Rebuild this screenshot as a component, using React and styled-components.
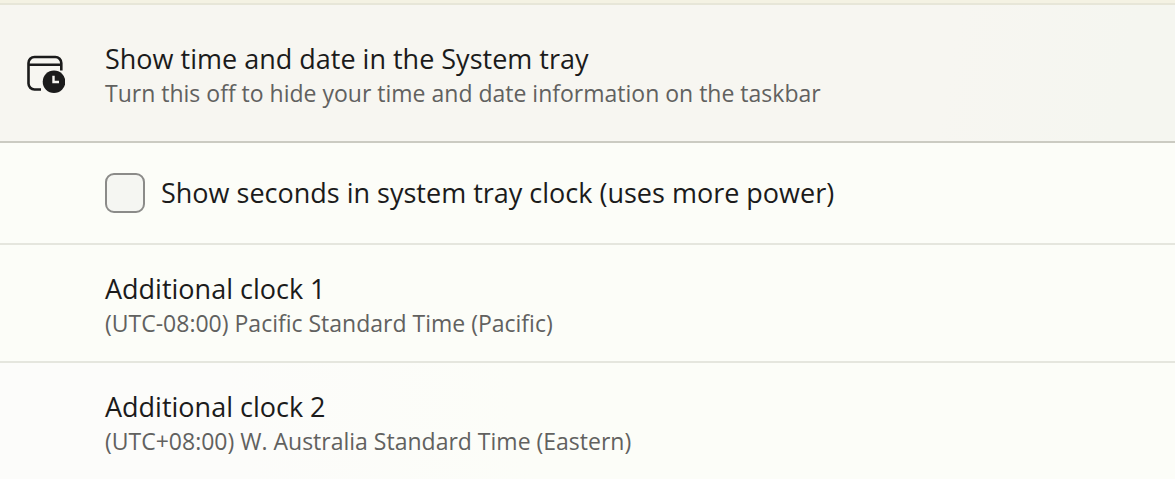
import React, { useState } from "react";
import styled, { createGlobalStyle } from "styled-components";

const GlobalStyle = createGlobalStyle`
  body {
    margin: 0;
    background-color: #fcfdf8;
    color: #1b1b1b;
    font-family: "Segoe UI", "Open Sans", "Noto Sans", sans-serif;
  }
`;

const Panel = styled.main`
  border-top: 3px solid #f4f2e3;
`;

const Header = styled.header`
  display: flex;
  align-items: center;
  gap: 40px;
  padding: 36px 26px 32px 25px;
  border-top: 2px solid #e7e6d8;
  border-bottom: 2px solid #cbcbc2;
  background: linear-gradient(100deg, #f7f6f1 80%, #f5f6f0 95%);
`;

const Icon = styled.svg`
  width: 40px;
  height: 40px;
  flex-shrink: 0;
`;

const Row = styled.section`
  padding: ${({ $tall }) => ($tall ? "30px 26px 30px 105px" : "26px 26px 22px 105px")};
  border-bottom: ${({ $last }) => ($last ? "none" : "2px solid #e5e6de")};
  background: ${({ $last }) =>
    $last ? "linear-gradient(80deg, #fcfcfa 20%, #fcfdf8 45%)" : "transparent"};
`;

const Title = styled.h2`
  margin: 0;
  font-size: 27px;
  font-weight: 400;
  line-height: 36px;
`;

const Description = styled.p`
  margin: 0;
  color: #61615f;
  font-size: 23px;
  line-height: 32px;
`;

const CheckLabel = styled.label`
  display: flex;
  align-items: center;
  gap: 16px;
  font-size: 27px;
  line-height: 36px;
`;

const Checkbox = styled.input`
  appearance: none;
  box-sizing: border-box;
  width: 40px;
  height: 40px;
  margin: 0;
  flex-shrink: 0;
  border: 2px solid #8b8b89;
  border-radius: 9px;
  background-color: #f5f6f2;

  &:checked {
    background-color: #5d5d4b;
  }
`;

const CalendarClockIcon = () => (
  <Icon viewBox="0 0 40 40" fill="none" aria-hidden="true">
    <path
      d="M36.3 15.500V8A6 6 0 0 0 30.300 2H9.500A6 6 0 0 0 3.500 8V28.500A6 6 0 0 0 9.500 34.500H16M3.500 9.800H36"
      stroke="#1b1b1b"
      strokeWidth="2.6"
    />
    <circle cx="29" cy="26.800" r="11.300" fill="#1b1b1b" />
    <path d="M28.500 20.800V27H34" stroke="#f7f6f1" strokeWidth="2.4" />
  </Icon>
);

const clocks = [
  { name: "Additional clock 1", zone: "(UTC-08:00) Pacific Standard Time (Pacific)" },
  { name: "Additional clock 2", zone: "(UTC+08:00) W. Australia Standard Time (Eastern)" },
];

const App = () => {
  const [showSeconds, setShowSeconds] = useState(false);

  return (
    <>
      <GlobalStyle />
      <Panel>
        <Header>
          <CalendarClockIcon />
          <div>
            <Title>Show time and date in the System tray</Title>
            <Description>
              Turn this off to hide your time and date information on the taskbar
            </Description>
          </div>
        </Header>
        <Row $tall>
          <CheckLabel htmlFor="show-seconds">
            <Checkbox
              id="show-seconds"
              type="checkbox"
              checked={showSeconds}
              onChange={(e) => setShowSeconds(e.target.checked)}
            />
            Show seconds in system tray clock (uses more power)
          </CheckLabel>
        </Row>
        {clocks.map((clock, i) => (
          <Row key={clock.name} $last={i === clocks.length - 1}>
            <Title>{clock.name}</Title>
            <Description>{clock.zone}</Description>
          </Row>
        ))}
      </Panel>
    </>
  );
};

export default App;
